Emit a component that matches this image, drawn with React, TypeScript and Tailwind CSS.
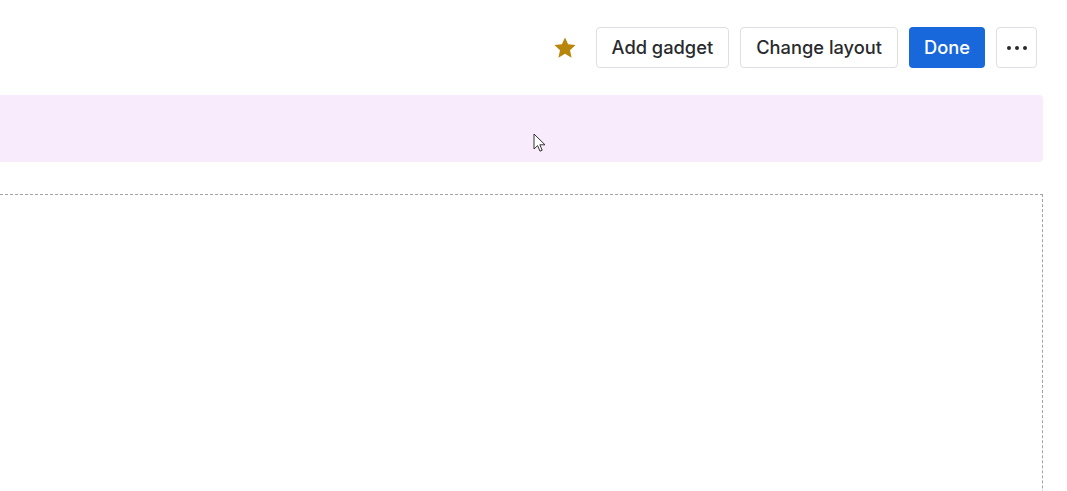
import React from "react"

function Star() {
    return (
        <svg width="26" height="26" viewBox="0 0 24 24" aria-hidden="true">
            <path
                d="M12 2.2l2.9 6.4 6.9.7-5.2 4.7 1.5 6.9L12 17.4l-6.1 3.5 1.5-6.9-5.2-4.7 6.9-.7z"
                fill="#b8860b"
            />
        </svg>
    )
}

function Cursor() {
    return (
        <svg width="14" height="20" viewBox="0 0 14 20" aria-hidden="true">
            <path
                d="M1 1v15l3.6-3.4 2.4 5.6 2.2-1-2.4-5.4H12z"
                fill="#ffffff"
                stroke="#333"
                strokeWidth="1"
                strokeLinejoin="round"
            />
        </svg>
    )
}

const btn =
    "h-[41px] px-[15px] rounded-[4px] border border-[#dcdfe4] bg-white text-[18.3px] font-medium text-[#292a2e] flex items-center"

export default function App() {
    return (
        <div
            className="relative w-[1067px] h-[491px] overflow-hidden bg-white pr-[24px]"
            style={{ fontFamily: "Inter, 'Noto Sans', sans-serif" }}
        >
            {/* Toolbar */}
            <div className="flex justify-end items-center gap-[11px] pt-[27px] pr-[6px]">
                <button className="w-[36px] h-[41px] mr-[2px] flex items-center justify-center">
                    <Star />
                </button>
                <button className={btn}>Add gadget</button>
                <button className={btn}>Change layout</button>
                <button className="h-[41px] px-[15px] rounded-[4px] bg-[#1868db] text-[18.3px] font-medium text-white flex items-center">
                    Done
                </button>
                <button className="w-[41px] h-[41px] rounded-[4px] border border-[#dcdfe4] bg-white flex items-center justify-center gap-[4px]">
                    <span className="w-[4px] h-[4px] rounded-full bg-[#292a2e]" />
                    <span className="w-[4px] h-[4px] rounded-full bg-[#292a2e]" />
                    <span className="w-[4px] h-[4px] rounded-full bg-[#292a2e]" />
                </button>
            </div>

            {/* Drop banner */}
            <div className="mt-[27px] h-[67px] bg-[#f8ebfc] rounded-r-[4px]" />

            {/* Gadget column */}
            <div className="mt-[32px] h-[400px] border-t border-r border-dashed border-[#a3a3a3]" />

            <div className="absolute left-[533px] top-[133px]">
                <Cursor />
            </div>
        </div>
    )
}
